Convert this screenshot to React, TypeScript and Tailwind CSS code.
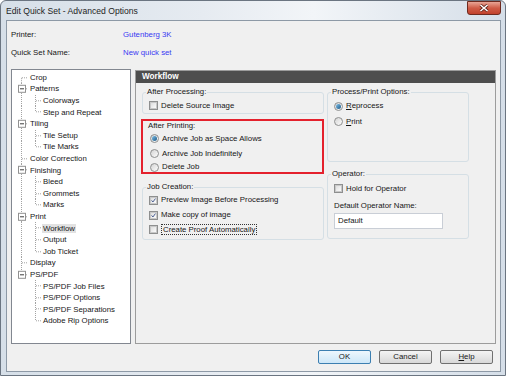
import type { ReactNode } from "react"

const FONT = "font-['Liberation_Sans',Arial,sans-serif]"

type Item = { t: string; l: 0 | 1; exp?: boolean; last?: boolean; sel?: boolean }

const TREE: Item[] = [
  { t: "Crop", l: 0 },
  { t: "Patterns", l: 0, exp: true },
  { t: "Colorways", l: 1 },
  { t: "Step and Repeat", l: 1, last: true },
  { t: "Tiling", l: 0, exp: true },
  { t: "Tile Setup", l: 1 },
  { t: "Tile Marks", l: 1, last: true },
  { t: "Color Correction", l: 0 },
  { t: "Finishing", l: 0, exp: true },
  { t: "Bleed", l: 1 },
  { t: "Grommets", l: 1 },
  { t: "Marks", l: 1, last: true },
  { t: "Print", l: 0, exp: true },
  { t: "Workflow", l: 1, sel: true },
  { t: "Output", l: 1 },
  { t: "Job Ticket", l: 1, last: true },
  { t: "Display", l: 0 },
  { t: "PS/PDF", l: 0, exp: true },
  { t: "PS/PDF Job Files", l: 1 },
  { t: "PS/PDF Options", l: 1 },
  { t: "PS/PDF Separations", l: 1 },
  { t: "Adobe Rip Options", l: 1, last: true },
]

const LAST_ROOT = 17
const ROW = 11.6

function TreeRow({ item, idx }: { item: Item; idx: number }) {
  const mid = ROW / 2
  const dash = { stroke: "#a3a3a3", strokeWidth: 1, strokeDasharray: "1 1" }
  const rootTop = idx === 0 ? mid : 0
  const rootBottom = idx === LAST_ROOT ? mid : ROW
  const hasRoot = idx <= LAST_ROOT
  return (
    <div className="flex items-center" style={{ height: ROW }}>
      <svg width={item.l === 0 ? 18 : 31} height={ROW} className="shrink-0">
        {hasRoot && <line x1={9.5} x2={9.5} y1={rootTop} y2={rootBottom} {...dash} />}
        {item.l === 0 && <line x1={10} x2={16} y1={mid} y2={mid} {...dash} />}
        {item.l === 1 && (
          <>
            <line x1={23.5} x2={23.5} y1={0} y2={item.last ? mid : ROW} {...dash} />
            <line x1={24} x2={30} y1={mid} y2={mid} {...dash} />
          </>
        )}
        {item.exp && (
          <>
            <rect x={6.5} y={mid - 3.5} width={7} height={7} fill="#fff" stroke="#919191" />
            <line x1={8} x2={12} y1={mid} y2={mid} stroke="#3c3c3c" />
          </>
        )}
      </svg>
      <span className={item.sel ? "-ml-[1px] bg-[#e2e2e2] px-[1px] leading-[9px]" : "leading-[9px]"}>{item.t}</span>
    </div>
  )
}

function Check({ checked }: { checked?: boolean }) {
  return (
    <span className="flex h-[9px] w-[9px] shrink-0 items-center justify-center border border-[#8e8f8f] bg-white">
      <span className="flex h-[7px] w-[7px] items-center justify-center border border-[#c8c8c8] bg-gradient-to-br from-[#dedede] to-[#fbfbfb]">
        {checked && (
          <svg width="7" height="7" viewBox="0 0 7 7">
            <path d="M0.8 3.4 L2.7 5.6 L6.2 0.8" stroke="#42588f" strokeWidth="1.3" fill="none" />
          </svg>
        )}
      </span>
    </span>
  )
}

function Radio({ checked }: { checked?: boolean }) {
  return (
    <span className="flex h-[9px] w-[9px] shrink-0 items-center justify-center rounded-full border border-[#8e8f8f] bg-gradient-to-br from-[#d4d4d4] to-[#fdfdfd]">
      {checked && <span className="h-[5px] w-[5px] rounded-full bg-gradient-to-br from-[#7fc0e9] to-[#1b5a86]" />}
    </span>
  )
}

function Row({ children, h = 15, className = "" }: { children: ReactNode; h?: number; className?: string }) {
  return (
    <div className={`flex items-center gap-[3px] ${className}`} style={{ height: h }}>
      {children}
    </div>
  )
}

function Group({ label, className, children }: { label: string; className: string; children: ReactNode }) {
  return (
    <fieldset className={`rounded-[3px] border border-[#d5dfe5] pl-[3px] ${className}`}>
      <legend className="px-[1px] leading-[10px]">{label}</legend>
      {children}
    </fieldset>
  )
}

function Btn({ children, primary }: { children: ReactNode; primary?: boolean }) {
  return (
    <div
      className={`flex h-[14px] w-[53px] items-center justify-center rounded-[2px] border ${
        primary
          ? "border-[#3c7fb1] bg-gradient-to-b from-[#eef7fd] to-[#cde7f8]"
          : "border-[#707070] bg-gradient-to-b from-[#f4f4f4] to-[#d8d8d8]"
      }`}
    >
      {children}
    </div>
  )
}

export default function App() {
  return (
    <div
      className={`flex h-[376px] w-[506px] flex-col rounded-t-[6px] border border-[#6b7581] bg-[linear-gradient(90deg,#d6dfe8_0%,#e6ebf1_40%,#f2f5f8_62%,#d5dee8_100%)] pr-[4px] pb-[3px] pl-[5px] text-[7.8px] text-[#161616] ${FONT}`}
    >
      {/* title bar */}
      <div className="flex h-[19px] shrink-0 items-start">
        <span className="mt-[5px] text-[8.6px] leading-[10px] text-[#1e1e1e]">Edit Quick Set - Advanced Options</span>
        <div className="ml-auto flex h-[14px] w-[34px] items-center justify-center rounded-b-[3px] border border-[#6e2a1f] bg-gradient-to-b from-[#e7a596] via-[#cf5c47] to-[#c1412c]">
          <svg width="10" height="8" viewBox="0 0 10 8">
            <path d="M1.5 1 L8.5 7 M8.5 1 L1.5 7" stroke="#5a1e15" strokeWidth="3" />
            <path d="M1.5 1 L8.5 7 M8.5 1 L1.5 7" stroke="#ffffff" strokeWidth="1.6" />
          </svg>
        </div>
      </div>

      {/* client area */}
      <div className="flex h-[352px] flex-col border border-[#8d99a6] bg-[#f0f0f0] px-[4px] pt-[8px]">
        <div className="flex h-[12px] items-center">
          <span className="w-[112px]">Printer:</span>
          <span className="text-[#3a3af2]">Gutenberg 3K</span>
        </div>
        <div className="mt-[6px] flex h-[12px] items-center">
          <span className="w-[112px]">Quick Set Name:</span>
          <span className="text-[#3a3af2]">New quick set</span>
        </div>

        <div className="mt-[10px] flex gap-[4px]">
          {/* tree */}
          <div className="h-[275px] w-[120px] border border-[#828790] bg-white pt-[1.6px]">
            {TREE.map((it, i) => (
              <TreeRow key={it.t} item={it} idx={i} />
            ))}
          </div>

          {/* workflow panel */}
          <div className="mt-[1px] h-[274px] w-[361px] border border-[#9c9c9c]">
            <div className="flex h-[12px] items-center bg-[#4e4e4e] pl-[6px] text-[8.2px] font-bold text-white">Workflow</div>
            <div className="flex gap-[3px] pt-[4px] pl-[6px]">
              <div className="flex w-[182px] flex-col">
                <Group label="After Processing:" className="h-[27px]">
                  <Row className="mt-[1px] pl-[3px]">
                    <Check />
                    <span>Delete Source Image</span>
                  </Row>
                </Group>

                <div className="-ml-[1px] mt-[5px] h-[55px] border-2 border-[#e4212d] pl-[5px]">
                  <div className="flex h-[10px] items-center">After Printing:</div>
                  <Row className="pl-[2px]">
                    <Radio checked />
                    <span>Archive Job as Space Allows</span>
                  </Row>
                  <Row className="pl-[2px]">
                    <Radio />
                    <span>Archive Job Indefinitely</span>
                  </Row>
                  <Row h={12} className="pl-[2px]">
                    <Radio />
                    <span>Delete Job</span>
                  </Row>
                </div>

                <Group label="Job Creation:" className="mt-[8px] h-[58px]">
                  <Row className="mt-[0.5px] pl-[3px]">
                    <Check checked />
                    <span>Preview Image Before Processing</span>
                  </Row>
                  <Row className="pl-[3px]">
                    <Check checked />
                    <span>Make copy of image</span>
                  </Row>
                  <Row h={14} className="pl-[3px]">
                    <Check />
                    <span className="border border-dotted border-[#333] px-[1px] leading-[9px]">Create Proof Automatically</span>
                  </Row>
                </Group>
              </div>

              <div className="flex w-[142px] flex-col">
                <Group label="Process/Print Options:" className="h-[75px]">
                  <Row h={15.5} className="mt-[1.5px] pl-[3px]">
                    <Radio checked />
                    <span>
                      <span className="underline">R</span>eprocess
                    </span>
                  </Row>
                  <Row h={15.5} className="pl-[3px]">
                    <Radio />
                    <span>
                      <span className="underline">P</span>rint
                    </span>
                  </Row>
                </Group>

                <Group label="Operator:" className="mt-[7px] h-[70px]">
                  <Row className="mt-[2px] pl-[3px]">
                    <Check />
                    <span>Hold for Operator</span>
                  </Row>
                  <div className="mt-[5px] flex h-[10px] items-center pl-[3px]">Default Operator Name:</div>
                  <div className="mt-[2px] ml-[3px] flex h-[16px] w-[109px] items-center border border-[#c9ced6] bg-white pl-[3px]">
                    Default
                  </div>
                </Group>
              </div>
            </div>
          </div>
        </div>

        <div className="mt-[6px] flex justify-end gap-[8px] pr-[3px]">
          <Btn primary>OK</Btn>
          <Btn>Cancel</Btn>
          <Btn>
            <span>
              <span className="underline">H</span>elp
            </span>
          </Btn>
        </div>
      </div>
    </div>
  )
}
